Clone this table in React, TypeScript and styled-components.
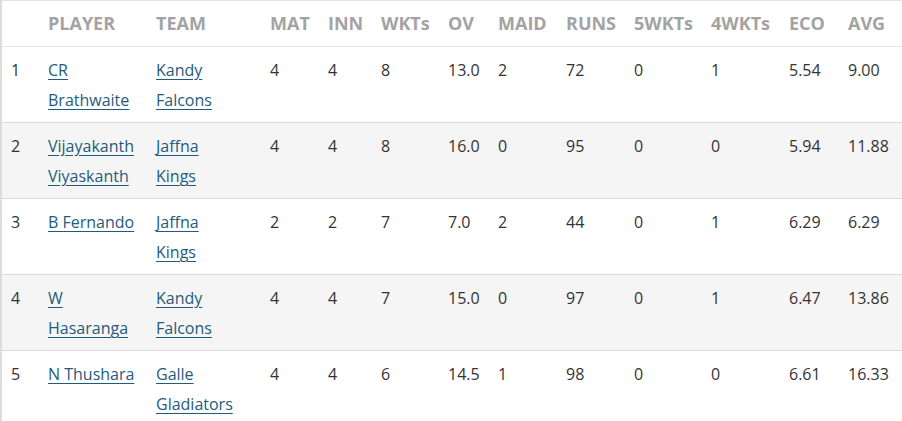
import styled, { createGlobalStyle } from "styled-components";

const GlobalStyle = createGlobalStyle`
  body {
    margin: 0;
    background: #fff;
    font-family: "Open Sans", "Noto Sans", sans-serif;
  }
`;

const Table = styled.table`
  width: 902px;
  table-layout: fixed;
  border-collapse: collapse;
  border-top: 1px solid #e2e2e2;
  border-left: 2px solid #dcdcdc;
  font-size: 16px;
  line-height: 30px;
  color: #333;
`;

const HeadCell = styled.th<{ $keepCase?: boolean }>`
  padding: 7px 0 8px 9px;
  text-align: left;
  font-size: 18px;
  font-weight: 700;
  color: #a3a3a3;
  text-transform: ${(p) => (p.$keepCase ? "none" : "uppercase")};
  border-bottom: 1px solid #e4e4e4;
  white-space: nowrap;
  overflow: hidden;
`;

const Row = styled.tr<{ $striped: boolean }>`
  background: ${(p) => (p.$striped ? "#f5f5f5" : "#fff")};
  border-bottom: 1px solid #dcdcdc;
`;

const Cell = styled.td<{ $padRight?: number }>`
  padding: 8px ${(p) => p.$padRight ?? 4}px 7px 9px;
  vertical-align: top;
`;

const Link = styled.a`
  color: #1f5b7c;
  text-decoration: underline;
  text-underline-offset: 3px;
  cursor: pointer;
`;

const columns: [string, number][] = [
  ["", 38],
  ["Player", 108],
  ["Team", 114],
  ["Mat", 58],
  ["Inn", 53],
  ["WKTs", 67],
  ["Ov", 50],
  ["Maid", 68],
  ["Runs", 68],
  ["5WKTs", 77],
  ["4WKTs", 78],
  ["Eco", 59],
  ["Avg", 64],
];

const rows = [
  ["1", "CR Brathwaite", "Kandy Falcons", "4", "4", "8", "13.0", "2", "72", "0", "1", "5.54", "9.00"],
  ["2", "Vijayakanth Viyaskanth", "Jaffna Kings", "4", "4", "8", "16.0", "0", "95", "0", "0", "5.94", "11.88"],
  ["3", "B Fernando", "Jaffna Kings", "2", "2", "7", "7.0", "2", "44", "0", "1", "6.29", "6.29"],
  ["4", "W Hasaranga", "Kandy Falcons", "4", "4", "7", "15.0", "0", "97", "0", "1", "6.47", "13.86"],
  ["5", "N Thushara", "Galle Gladiators", "4", "4", "6", "14.5", "1", "98", "0", "0", "6.61", "16.33"],
];

export default function App() {
  return (
    <>
      <GlobalStyle />
      <Table>
        <colgroup>
          {columns.map(([label, w]) => (
            <col key={label || "idx"} style={{ width: w }} />
          ))}
        </colgroup>
        <thead>
          <tr>
            {columns.map(([label]) => (
              <HeadCell key={label || "idx"} $keepCase={label.endsWith("WKTs")}>
                {label}
              </HeadCell>
            ))}
          </tr>
        </thead>
        <tbody>
          {rows.map((r, i) => (
            <Row key={r[0]} $striped={i % 2 === 1}>
              {r.map((v, j) => (
                <Cell key={j} $padRight={j === 2 ? 24 : 4}>
                  {j === 1 || j === 2 ? <Link>{v}</Link> : v}
                </Cell>
              ))}
            </Row>
          ))}
        </tbody>
      </Table>
    </>
  );
}
